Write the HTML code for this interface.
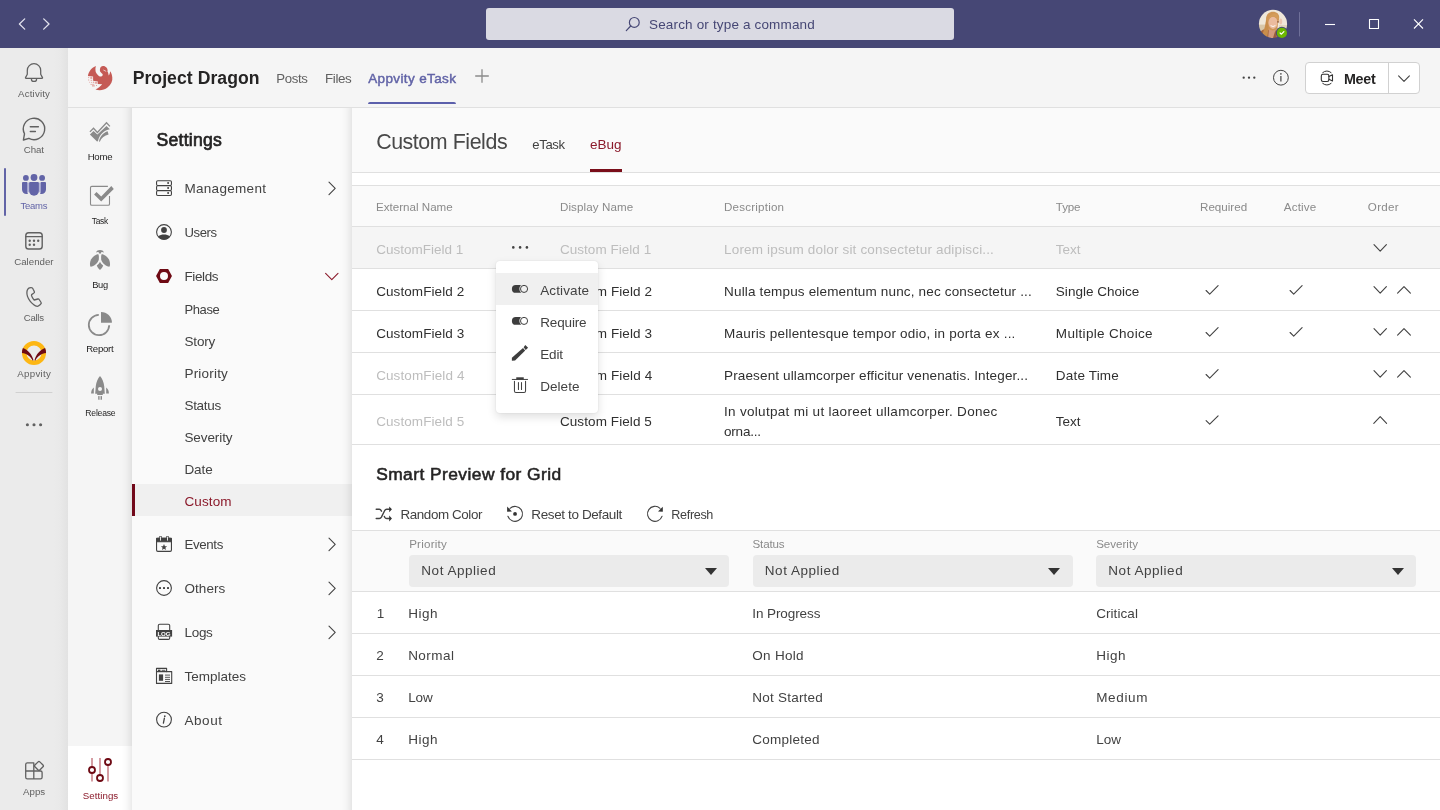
<!DOCTYPE html>
<html><head><meta charset="utf-8"><title>Project Dragon</title>
<style>
*{box-sizing:border-box;margin:0;padding:0}
html,body{width:1440px;height:810px;overflow:hidden;background:#fff;font-family:"Liberation Sans",sans-serif;color:#252424}
.a{position:absolute}
.t{position:absolute;white-space:nowrap;display:block}
svg{position:absolute;overflow:visible}
.hl{position:absolute;height:1px;background:#e0e0e0;left:352px;width:1088px}
#w{position:absolute;left:0;top:0;width:1440px;height:810px;will-change:transform}

</style></head><body>
<div id="w">
<div class="a" style="left:0;top:0;width:1440px;height:48px;background:#464775"></div>
<div class="a" style="left:0;top:48px;width:68px;height:762px;background:linear-gradient(90deg,#ebebeb 0,#ebebeb 54px,#e9e9e9 60px,#e2e2e2 68px)"></div>
<div class="a" style="left:68px;top:48px;width:1372px;height:60px;background:#f5f5f5;border-bottom:1px solid #e0e0e0"></div>
<div class="a" style="left:0;top:108px;width:1440px;height:702px;overflow:hidden"><div class="a" style="left:0;top:-108px;width:1440px;height:810px"><div class="a" style="left:68px;top:108px;width:64px;height:702px;background:#f5f5f5"></div><div class="a" style="left:68px;top:746px;width:64px;height:64px;background:#fff"></div><div class="a" style="left:132px;top:100px;width:220px;height:720px;background:#fafafa;box-shadow:0 0 10px rgba(0,0,0,.17)"></div><div class="a" style="left:132px;top:484px;width:220px;height:32px;background:#f0f0f0"></div><div class="a" style="left:132px;top:484px;width:3px;height:32px;background:#72091a"></div><div class="a" style="left:352px;top:100px;width:1100px;height:720px;background:#fff;box-shadow:0 0 10px rgba(0,0,0,.17)"></div></div></div>
<svg style="left:0;top:0" width="1440" height="48" viewBox="0 0 1440 48" fill="none" stroke="#e3e3ee" stroke-width="1.3" stroke-linecap="round" stroke-linejoin="round"><path d="M24.7 18.9 L19.4 24 L24.7 29.1"/><path d="M43.7 18.9 L49 24 L43.7 29.1"/><path d="M1325 24.5 H1335" stroke="#fff" stroke-width="1.1" stroke-linecap="butt"/><rect x="1369.5" y="19.5" width="9" height="9" stroke="#fff" stroke-width="1.1"/><path d="M1414 19.3 L1423 28.5 M1423 19.3 L1414 28.5" stroke="#fff" stroke-width="1.1" stroke-linecap="butt"/><path d="M1299.5 12.5 V36" stroke="#6f7099" stroke-width="1"/></svg>
<div class="a" style="left:486px;top:8px;width:468px;height:32px;background:#dadae3;border-radius:3px"></div>
<svg style="left:0;top:0" width="1440" height="48" viewBox="0 0 1440 48" fill="none" stroke="#464775" stroke-width="1.2" stroke-linecap="round"><circle cx="634.3" cy="22.4" r="4.9"/><path d="M630.7 26 L626.3 30.6"/></svg>
<span class="t" style="left:649.05px;top:15px;font-size:13.5px;line-height:19px;color:#464775;letter-spacing:0.157px;">Search or type a command</span>
<svg style="left:1256px;top:7px" width="36" height="36" viewBox="0 0 36 36"><defs><clipPath id="av"><circle cx="17" cy="16.9" r="14.1"/></clipPath><filter id="bl" x="-10%" y="-10%" width="120%" height="120%"><feGaussianBlur stdDeviation="0.55"/></filter></defs><g clip-path="url(#av)"><g filter="url(#bl)"><rect x="0" y="0" width="36" height="36" fill="#efe7d9"/><rect x="0" y="17.6" width="12" height="5.4" fill="#d9c7a8"/><rect x="23" y="18" width="10" height="3.4" fill="#e2d5bd"/><path d="M10 12.5 C10 7 13.5 4.8 17 4.8 C21 4.8 23.5 7.5 23.2 11 C23 14 22 15 22 17 L21 24 L10.5 26 C9.5 22 9.5 17 10 12.5 Z" fill="#cf9656"/><path d="M4 24.5 C8 21.5 11 22 13 23.5 L15 32 L5 30 Z" fill="#a8673c"/><path d="M13 22 C15 24 19 24 21 21.5 L22 32 L12 32 Z" fill="#d39a7c"/><ellipse cx="17" cy="15.8" rx="4.6" ry="6.1" fill="#ebbb9e"/><path d="M12.2 13.4 C13 8.5 16 6.2 19.5 6.5 C21.8 7 23 9 22.6 12.8 C21 10.5 19 9.2 16.5 9.4 C14.5 10 13 11.5 12.2 13.4 Z" fill="#d49c5a"/><path d="M10.2 13 C11.6 14 12.5 17 12.4 20 C12.3 24 11.6 27 11.2 31 L6.5 27 C8.5 22 9.6 17 10.2 13 Z" fill="#c98d4c"/><ellipse cx="24.7" cy="14.6" rx="1.5" ry="3" fill="#ecc6b0"/><circle cx="22" cy="14.9" r="0.8" fill="#8a5537"/><path d="M14.6 18.6 Q17 20.4 19.4 18.6" stroke="#fff" stroke-width="0.9" fill="none"/><path d="M19.5 23 L21 31 L17 31 Z" fill="#9b5c3c"/></g></g><circle cx="25.9" cy="25.9" r="6.1" fill="#464775"/><circle cx="25.9" cy="25.9" r="5.1" fill="#6bb700"/><path d="M24.1 26 L25.4 27.2 L27.9 24.6" fill="none" stroke="#fff" stroke-width="1.2" stroke-linecap="round" stroke-linejoin="round"/></svg>
<svg style="left:84px;top:61px" width="32" height="32" viewBox="0 0 32 32"><path d="M11.9 5.1 C8 6.5 4.5 10.5 3.95 15 L9.1 15.4 L9.1 19.8 L13.8 20.5 L13.8 22.9 L18.2 23.3 C16.5 25.5 14 27.5 11.5 28.5 C15 29.6 20 29.5 23.5 26.5 C27 23.5 28.8 20 28.3 16.5 C28.1 14 27.4 12 26.1 10.3 C26 12 25.5 13.5 24.7 14.6 C24.5 12.5 24 11 23.3 9.9 L23.7 9.5 C23.5 8 23 7 22.1 6.3 C21.2 5.3 20 4.8 19 4.9 C17.5 5.1 16.3 6 16.2 7.1 C15.8 8.3 15.8 9.5 16 10.3 C16.6 11.6 17.8 12.2 18.6 13 C19 14.2 18.2 15.4 17 15.6 C15.4 15.6 14.2 14.6 13.4 13.4 C12.2 12 11.5 10.8 11.5 9.5 C11.3 8 11.4 6.5 11.9 5.1 Z" fill="#c55a55"/><path d="M19.4 9 L22.2 10.4" stroke="#f5f5f5" stroke-width="0.7" fill="none"/><g fill="#e3a7a3"><rect x="4.2" y="15.8" width="1" height="1.3"/><rect x="6.3" y="15.9" width="2" height="2"/><rect x="4.2" y="18.4" width="1" height="1.2"/><rect x="6.6" y="18.8" width="1.6" height="1"/><rect x="5.2" y="20.8" width="0.9" height="0.9"/><rect x="7.2" y="20.9" width="1" height="1"/><rect x="9.1" y="20.6" width="1.1" height="1.5"/><rect x="10.9" y="20.8" width="2.6" height="1.9"/><rect x="6.4" y="22.9" width="3.8" height="0.8"/><rect x="8" y="24.2" width="2.8" height="1.3"/><rect x="12" y="24" width="1" height="1"/></g></svg>
<span class="t" style="left:132.65px;top:66px;font-size:17.6px;line-height:24px;color:#252424;letter-spacing:0.058px;font-weight:bold;">Project Dragon</span>
<span class="t" style="left:276.35px;top:69px;font-size:13.2px;line-height:19px;color:#616161;letter-spacing:-0.375px;">Posts</span>
<span class="t" style="left:325.05px;top:69px;font-size:13.4px;line-height:19px;color:#616161;letter-spacing:-0.375px;">Files</span>
<span class="t" style="left:368.25px;top:69px;font-size:13.5px;line-height:19px;color:#6264a7;letter-spacing:0.363px;-webkit-text-stroke:0.45px #6264a7;">Appvity eTask</span>
<div class="a" style="left:368px;top:102px;width:88px;height:2px;background:#5b5fab;border-radius:2px 2px 0 0"></div>
<svg style="left:0;top:48px" width="1440" height="60" viewBox="0 48 1440 60" fill="none" stroke="#8a8a8a" stroke-width="1.1"><path d="M475.2 76 H488.8 M482 69.3 V82.7" stroke-width="1.3"/><g fill="#424242" stroke="none"><circle cx="1243.7" cy="77.7" r="1.15"/><circle cx="1249" cy="77.7" r="1.15"/><circle cx="1254.3" cy="77.7" r="1.15"/></g><circle cx="1280.9" cy="77.7" r="7.4" stroke="#424242" stroke-width="1"/><path d="M1280.9 76 V81.6" stroke="#424242" stroke-width="1.2"/><circle cx="1280.9" cy="73.9" r="0.8" fill="#424242" stroke="none"/></svg>
<div class="a" style="left:1305px;top:62px;width:115px;height:32px;background:#fff;border:1px solid #d1d1d1;border-radius:4px"></div>
<div class="a" style="left:1388px;top:63px;width:1px;height:30px;background:#d1d1d1"></div>
<svg style="left:0;top:48px" width="1440" height="60" viewBox="0 48 1440 60" fill="none" stroke="#333" stroke-width="1.1" stroke-linecap="round" stroke-linejoin="round"><rect x="1321.3" y="74.3" width="7.6" height="7.2" rx="1.7"/><path d="M1328.9 76.6 L1332.5 74.8 V81 L1328.9 79.2"/><path d="M1322.7 72.6 A6.7 6.7 0 0 1 1331.1 72.6" stroke-width="1"/><path d="M1322.7 83.4 A6.7 6.7 0 0 0 1331.1 83.4" stroke-width="1"/><path d="M1398.6 75.8 L1404 81.4 L1409.4 75.8" stroke="#424242" stroke-width="1.1"/></svg>
<span class="t" style="left:1343.95px;top:69px;font-size:14.3px;line-height:20px;color:#252424;letter-spacing:-0.233px;font-weight:bold;">Meet</span>
<svg style="left:0;top:48px" width="68" height="762" viewBox="0 48 68 762" fill="none" stroke="#616161" stroke-width="1.3" stroke-linecap="round" stroke-linejoin="round"><path d="M27.3 74.2 V70.4 A6.7 6.7 0 0 1 40.7 70.4 V74.2 L42.5 77.6 Q42.7 78.3 42 78.3 H26 Q25.3 78.3 25.5 77.6 Z" stroke-width="1.25"/><path d="M31.4 78.9 A2.6 2.6 0 0 0 36.6 78.9" stroke-width="1.25"/><path d="M28.9 138.3 A10.7 10.7 0 1 0 24.5 133.8 L23.4 140 Z" stroke-width="1.4"/><path d="M30.3 126.8 H38.4 M30.3 131.5 H35.4" stroke-width="1.4"/><rect x="25.8" y="232.8" width="16.4" height="16.2" rx="2.8" stroke-width="1.4"/><path d="M25.8 236.7 H42.2" stroke-width="1.3"/><g fill="#616161" stroke="none"><circle cx="29.7" cy="240.7" r="1.2"/><circle cx="34" cy="240.7" r="1.2"/><circle cx="38.2" cy="240.7" r="1.2"/><circle cx="29.7" cy="244.7" r="1.2"/><circle cx="34" cy="244.7" r="1.2"/></g><path d="M31 287.7 C32.4 287.6 32.9 288.5 33.2 289.3 L34.4 291.7 C34.7 292.5 34.3 292.9 33.6 293.3 L31.6 294.6 C31.2 295.2 31.6 296 32 296.8 C32.6 298 33.4 299.2 34.2 300 L37.8 299 C38.6 298.8 39.1 299.4 39.5 300 L41.1 302.5 C41.5 303.3 41.2 303.8 40.5 304.3 C39.5 305.2 38.5 306.3 37.4 306.3 C36 306.2 34.8 305.6 33.8 304.7 C32.4 303.6 31 302.3 29.9 300.8 C28.8 299.4 28 297.9 27.5 296.4 C27 294.9 26.8 293.4 26.9 292.1 C27 290.9 27.2 290 27.7 289.3 C28.2 288.6 28.9 288.1 29.5 287.9 Z"/><path d="M16 392.5 H52" stroke="#d1d1d1" stroke-width="1"/><g fill="#616161" stroke="none"><circle cx="27.4" cy="424.7" r="1.55"/><circle cx="34" cy="424.7" r="1.55"/><circle cx="40.6" cy="424.7" r="1.55"/></g><path d="M27.3 762.9 H33.8 V778.9 H27.3 Q25.7 778.9 25.7 777.3 V764.5 Q25.7 762.9 27.3 762.9 Z M25.7 771 H40.5 Q42.1 771 42.1 772.6 V777.3 Q42.1 778.9 40.5 778.9 H33.8"/><rect x="-3.45" y="-3.45" width="6.9" height="6.9" rx="1.2" transform="translate(38.95 765.9) rotate(45)" fill="#ebebeb"/></svg>
<div class="a" style="left:4px;top:168px;width:2px;height:48px;background:#6264a7;border-radius:1px"></div>
<svg style="left:0;top:48px" width="68" height="762" viewBox="0 48 68 762" fill="#6264a7" stroke="none"><circle cx="34" cy="177.5" r="3.4"/><circle cx="25.9" cy="177.9" r="2.9"/><circle cx="42.1" cy="177.9" r="2.9"/><rect x="27" y="182.6" width="2.3" height="9.6" fill="#b5b6d8"/><rect x="38.7" y="182.6" width="2.3" height="9.6" fill="#b5b6d8"/><path d="M29.1 183 Q29.1 182 30.1 182 H37.9 Q38.9 182 38.9 183 V190.8 A4.9 4.9 0 0 1 29.1 190.8 Z"/><path d="M23 182 H27.2 V191.6 L27.9 193.9 H26.5 C24 193.9 22 191.9 22 189.4 V183 Q22 182 23 182 Z"/><path d="M40.8 182 H45 Q46 182 46 183 V189.4 C46 191.9 44 193.9 41.5 193.9 H40.1 L40.8 191.6 Z"/></svg>
<svg style="left:18px;top:337px" width="32" height="32" viewBox="0 0 32 32"><circle cx="16" cy="16" r="9.8" fill="none" stroke="#fdb714" stroke-width="4.5"/><path d="M4.9 11 C9.5 12.8 14 17 15.5 23.3 L14.5 23.4 C13 19.5 8.5 16.6 3.95 16 C3.9 14.3 4.2 12.6 4.9 11 Z" fill="#6e0b16"/><path d="M27.1 11 C22.5 12.8 18 17 16.5 23.3 L17.5 23.4 C19 19.5 23.5 16.6 28.05 16 C28.1 14.3 27.8 12.6 27.1 11 Z" fill="#6e0b16"/></svg>
<span class="t" style="left:18.05px;top:86px;font-size:9.7px;line-height:15px;color:#616161;letter-spacing:0.171px;">Activity</span>
<span class="t" style="left:23.85px;top:142px;font-size:9.7px;line-height:15px;color:#616161;letter-spacing:-0.133px;">Chat</span>
<span class="t" style="left:20.55px;top:198px;font-size:9.5px;line-height:15px;color:#6264a7;letter-spacing:-0.275px;">Teams</span>
<span class="t" style="left:14.25px;top:254px;font-size:9.7px;line-height:15px;color:#616161;letter-spacing:-0.007px;">Calender</span>
<span class="t" style="left:23.75px;top:310px;font-size:9.6px;line-height:15px;color:#616161;letter-spacing:-0.263px;">Calls</span>
<span class="t" style="left:17.25px;top:366px;font-size:9.7px;line-height:15px;color:#616161;letter-spacing:0.317px;">Appvity</span>
<span class="t" style="left:23.05px;top:784px;font-size:9.7px;line-height:15px;color:#616161;">Apps</span>
<svg style="left:68px;top:108px" width="64" height="702" viewBox="68 108 64 702" fill="#8a8a8a" stroke="none"><path d="M89.9 131.9 L93.5 128.2 L97.4 132.5 L106.5 122.8 L109.9 126.4" fill="none" stroke="#8a8a8a" stroke-width="1.3"/><path d="M89.9 134.4 L93.5 131 L97.4 134.6 L106.5 125.9 L109.8 129.2 C104.5 130.2 99.5 134 97.9 141.2 L97 141.4 Z"/><path d="M99 141.6 C99.6 136.5 103.5 132.6 107.6 131.3 L108.6 134.6 C104.6 135.5 101.4 137.8 99.8 141.8 Z"/><path d="M107.9 186.4 H91.8 Q90.5 186.4 90.5 187.7 V204 Q90.5 205.3 91.8 205.3 H108.2 Q109.5 205.3 109.5 204 V195.9" fill="none" stroke="#8a8a8a" stroke-width="1.1"/><path d="M94.1 194.4 L96.5 192.1 L101.2 196.4 L111.3 185.9 L113.8 188.9 L101.2 201.5 Z"/><path d="M95.9 252.5 C96.5 250.6 98.2 249.9 100 249.9 C101.8 249.9 103.5 250.6 104 252.5 C102.8 251.9 101.6 251.7 101.2 252.3 L101 253.6 H99 L98.7 252.3 C98.3 251.7 97.1 251.9 95.9 252.5 Z"/><path d="M98.4 254.3 C95 254.3 90.8 258 90.1 262.5 C89.8 264.5 90 266 90.6 266.8 C94 266.3 98.2 263 98.8 259.5 C99 257.5 98.9 255.5 98.4 254.3 Z"/><path d="M101.6 254.3 C105 254.3 109.2 258 109.9 262.5 C110.2 264.5 110 266 109.4 266.8 C106 266.3 101.8 263 101.2 259.5 C101 257.5 101.1 255.5 101.6 254.3 Z"/><path d="M100 261.8 C100.8 263.5 102 264.8 103.2 265.5 C102.6 267.2 101.4 268.8 100 269.9 C98.6 268.8 97.4 267.2 96.8 265.5 C98 264.8 99.2 263.5 100 261.8 Z"/><path d="M98.8 314.8 A10.2 10.2 0 1 0 109.2 325.2" fill="none" stroke="#8a8a8a" stroke-width="1.8"/><path d="M101 322.8 V311.9 A10.9 10.9 0 0 1 111.9 322.8 Z"/><path d="M100 375.9 C102.2 378.5 103.8 382 104.2 386 L104.8 393.7 H102.8 V394.9 H97.2 V393.7 H95.2 L95.8 386 C96.2 382 97.8 378.5 100 375.9 Z"/><circle cx="100" cy="389" r="2" fill="#f5f5f5"/><path d="M93.8 387.6 C92 389 91.1 391 91.1 393.6 H93.8 Z"/><path d="M106.2 387.6 C108 389 108.9 391 108.9 393.6 H106.2 Z"/><rect x="98.2" y="396.1" width="1.4" height="3.6"/><rect x="100.6" y="396.1" width="1.4" height="3.6"/><rect x="99.6" y="396.1" width="1" height="3.6" fill="#c4c4c4"/><g stroke="#c77f87" stroke-width="1.5" fill="none"><path d="M92 758 V781.6 M100 758 V781.6 M108 758 V781.6"/></g><g stroke="#6e0a14" stroke-width="1.8" fill="#fff"><circle cx="92" cy="770" r="3"/><circle cx="100" cy="778" r="3"/><circle cx="108" cy="762" r="3"/></g></svg>
<span class="t" style="left:87.65px;top:149px;font-size:9.6px;line-height:15px;color:#252424;letter-spacing:-0.233px;">Home</span>
<span class="t" style="left:91.65px;top:214px;font-size:8.4px;line-height:14px;color:#252424;letter-spacing:-0.200px;">Task</span>
<span class="t" style="left:92.15px;top:278px;font-size:9.3px;line-height:14px;color:#252424;letter-spacing:-0.275px;">Bug</span>
<span class="t" style="left:86.15px;top:341px;font-size:9.6px;line-height:15px;color:#252424;letter-spacing:-0.260px;">Report</span>
<span class="t" style="left:85.35px;top:406px;font-size:8.6px;line-height:14px;color:#252424;letter-spacing:-0.208px;">Release</span>
<span class="t" style="left:82.75px;top:788px;font-size:9.7px;line-height:15px;color:#8b1a2b;letter-spacing:0.064px;">Settings</span>
<span class="t" style="left:156.55px;top:128px;font-size:17.6px;line-height:24px;color:#252424;letter-spacing:0.243px;-webkit-text-stroke:0.7px #252424;">Settings</span>
<span class="t" style="left:184.45px;top:179px;font-size:13.5px;line-height:19px;color:#424242;letter-spacing:0.300px;">Management</span>
<span class="t" style="left:184.45px;top:223px;font-size:13.1px;line-height:19px;color:#424242;letter-spacing:-0.375px;">Users</span>
<span class="t" style="left:184.45px;top:267px;font-size:13.5px;line-height:19px;color:#424242;letter-spacing:-0.380px;">Fields</span>
<span class="t" style="left:184.45px;top:300px;font-size:13.0px;line-height:19px;color:#424242;letter-spacing:-0.388px;">Phase</span>
<span class="t" style="left:184.45px;top:332px;font-size:13.5px;line-height:19px;color:#424242;letter-spacing:-0.150px;">Story</span>
<span class="t" style="left:184.45px;top:364px;font-size:13.5px;line-height:19px;color:#424242;letter-spacing:0.200px;">Priority</span>
<span class="t" style="left:184.45px;top:396px;font-size:13.5px;line-height:19px;color:#424242;letter-spacing:-0.310px;">Status</span>
<span class="t" style="left:184.45px;top:428px;font-size:13.5px;line-height:19px;color:#424242;letter-spacing:-0.093px;">Severity</span>
<span class="t" style="left:184.45px;top:460px;font-size:13.5px;line-height:19px;color:#424242;letter-spacing:-0.067px;">Date</span>
<span class="t" style="left:184.45px;top:535px;font-size:13.3px;line-height:19px;color:#424242;letter-spacing:-0.350px;">Events</span>
<span class="t" style="left:184.45px;top:579px;font-size:13.5px;line-height:19px;color:#424242;letter-spacing:0.060px;">Others</span>
<span class="t" style="left:184.45px;top:623px;font-size:13.5px;line-height:19px;color:#424242;letter-spacing:-0.283px;">Logs</span>
<span class="t" style="left:184.45px;top:667px;font-size:13.5px;line-height:19px;color:#424242;letter-spacing:-0.006px;">Templates</span>
<span class="t" style="left:184.45px;top:711px;font-size:13.5px;line-height:19px;color:#424242;letter-spacing:0.575px;">About</span>
<span class="t" style="left:184.45px;top:492px;font-size:13.5px;line-height:19px;color:#8b1a2b;letter-spacing:0.120px;">Custom</span>
<svg style="left:132px;top:108px" width="220" height="702" viewBox="132 108 220 702" fill="none" stroke="#424242" stroke-width="1.1" stroke-linecap="round" stroke-linejoin="round"><path d="M329 182.2 L335.2 188.4 L329 194.6"/><path d="M329 538.2 L335.2 544.4 L329 550.6"/><path d="M329 582.2 L335.2 588.4 L329 594.6"/><path d="M329 626.2 L335.2 632.4 L329 638.6"/><path d="M325.6 273.4 L331.8 279.6 L338 273.4" stroke="#8b1a2b"/><rect x="156.55" y="180.75" width="14.9" height="4.7" rx="1.2"/><rect x="156.55" y="185.75" width="14.9" height="4.7" rx="1.2"/><rect x="156.55" y="190.75" width="14.9" height="4.7" rx="1.2"/><g fill="#424242" stroke="none"><circle cx="168.1" cy="183.1" r="1"/><circle cx="168.1" cy="188.1" r="1"/><circle cx="168.1" cy="193.1" r="1"/></g><circle cx="164" cy="232" r="7.4"/><circle cx="164" cy="230" r="2.9" fill="#424242" stroke="none"/><path d="M158.1 236.4 C159.8 235 161.8 234.6 164 234.6 C166.2 234.6 168.2 235 169.9 236.4 C168.7 238.5 166.5 239.6 164 239.6 C161.5 239.6 159.3 238.5 158.1 236.4 Z" fill="#424242" stroke="none"/><path d="M159.85 269.1 H168.15 L171.95 276 L168.15 282.9 H159.85 L156.05 276 Z M164 271.9 A4 4 0 1 0 164 279.9 A4 4 0 1 0 164 271.9 Z" fill="#6e0a14" stroke="none" fill-rule="evenodd"/><rect x="156.55" y="538.4" width="14.9" height="13" rx="1.3"/><path d="M156.6 538.4 H171.4 V541.8 H156.6 Z" fill="#424242"/><path d="M160.5 535.9 V540.2 M167.5 535.9 V540.2" stroke-width="2.3" stroke-linecap="butt"/><path d="M160.5 536.6 V540.6 M167.5 536.6 V540.6" stroke="#fafafa" stroke-width="0.9" stroke-linecap="butt"/><path d="M164 544 L164.95 546.2 L167.1 546.3 L165.4 547.8 L166 550 L164 548.8 L162 550 L162.6 547.8 L160.9 546.3 L163.05 546.2 Z" fill="#424242" stroke="none"/><circle cx="164" cy="588" r="7.4"/><g fill="#424242" stroke="none"><rect x="159" y="587" width="2" height="2" rx="0.5"/><rect x="163" y="587" width="2" height="2" rx="0.5"/><rect x="167" y="587" width="2" height="2" rx="0.5"/></g><path d="M158.3 630 V625.6 C158.3 624.8 158.9 624.2 159.7 624.2 H168.3 C169.1 624.2 169.7 624.8 169.7 625.6 V630 M158.3 636.6 V638 C158.3 638.8 158.9 639.4 159.7 639.4 H168.3 C169.1 639.4 169.7 638.8 169.7 638 V636.6"/><rect x="156" y="630" width="16.1" height="6.6" fill="#424242" stroke="none"/><path d="M156.5 671.6 V668.4 H166.6 V671.6" /><rect x="156.5" y="671.6" width="15.2" height="11.8"/><rect x="157.9" y="669.6" width="2.6" height="1.4" fill="#424242" stroke="none"/><path d="M162 670.3 H165" stroke-width="0.9"/><rect x="158.9" y="674.4" width="4.2" height="6.4" fill="#424242" stroke="none"/><path d="M165 675.1 H170 M165 677.3 H170 M165 679.4 H170 M165 681.5 H170" stroke-width="0.9" stroke-linecap="butt"/><circle cx="164" cy="719.6" r="7.4"/><path d="M164.4 718.2 L163.4 723.2" stroke-width="1.3"/><circle cx="164.8" cy="716.2" r="0.85" fill="#424242" stroke="none"/></svg>
<span class="t" style="left:157.45px;top:628px;font-size:6.2px;line-height:11px;color:#fff;letter-spacing:-0.175px;font-weight:bold;">LOG</span>
<div class="a" style="left:352px;top:108px;width:1088px;height:64px;background:#fafafa"></div>
<div class="hl" style="top:172px"></div>
<div class="hl" style="top:185px"></div>
<div class="a" style="left:352px;top:186px;width:1088px;height:40px;background:#fafafa"></div>
<div class="a" style="left:352px;top:227px;width:1088px;height:41px;background:#f5f5f5"></div>
<div class="hl" style="top:226px"></div>
<div class="hl" style="top:268px"></div>
<div class="hl" style="top:310px"></div>
<div class="hl" style="top:352px"></div>
<div class="hl" style="top:394px"></div>
<div class="hl" style="top:444px"></div>
<span class="t" style="left:376.15px;top:128px;font-size:21.4px;line-height:28px;color:#484848;letter-spacing:-0.438px;">Custom Fields</span>
<span class="t" style="left:532.35px;top:135px;font-size:13.1px;line-height:19px;color:#424242;letter-spacing:-0.387px;">eTask</span>
<span class="t" style="left:589.95px;top:135px;font-size:13.5px;line-height:19px;color:#8b1a2b;letter-spacing:0.050px;">eBug</span>
<div class="a" style="left:590px;top:169px;width:32px;height:3px;background:#7a0e1a"></div>
<span class="t" style="left:376.05px;top:198px;font-size:11.6px;line-height:17px;color:#8a8a8a;">External Name</span>
<span class="t" style="left:559.95px;top:198px;font-size:11.6px;line-height:17px;color:#8a8a8a;letter-spacing:0.100px;">Display Name</span>
<span class="t" style="left:724.05px;top:198px;font-size:11.6px;line-height:17px;color:#8a8a8a;letter-spacing:0.200px;">Description</span>
<span class="t" style="left:1055.85px;top:198px;font-size:11.6px;line-height:17px;color:#8a8a8a;letter-spacing:-0.150px;">Type</span>
<span class="t" style="left:1200.05px;top:198px;font-size:11.6px;line-height:17px;color:#8a8a8a;">Required</span>
<span class="t" style="left:1283.85px;top:198px;font-size:11.6px;line-height:17px;color:#8a8a8a;letter-spacing:0.140px;">Active</span>
<span class="t" style="left:1367.85px;top:198px;font-size:11.6px;line-height:17px;color:#8a8a8a;letter-spacing:0.312px;">Order</span>
<span class="t" style="left:376.15px;top:240px;font-size:13.5px;line-height:19px;color:#bdbdbd;letter-spacing:0.004px;">CustomField 1</span>
<span class="t" style="left:376.15px;top:282px;font-size:13.5px;line-height:19px;color:#303030;letter-spacing:0.087px;">CustomField 2</span>
<span class="t" style="left:376.15px;top:324px;font-size:13.5px;line-height:19px;color:#303030;letter-spacing:0.087px;">CustomField 3</span>
<span class="t" style="left:376.15px;top:366px;font-size:13.5px;line-height:19px;color:#bdbdbd;letter-spacing:0.104px;">CustomField 4</span>
<span class="t" style="left:376.15px;top:412px;font-size:13.5px;line-height:19px;color:#bdbdbd;letter-spacing:0.087px;">CustomField 5</span>
<span class="t" style="left:559.95px;top:240px;font-size:13.5px;line-height:19px;color:#bdbdbd;letter-spacing:0.038px;">Custom Field 1</span>
<span class="t" style="left:559.95px;top:282px;font-size:13.5px;line-height:19px;color:#303030;letter-spacing:0.100px;">Custom Field 2</span>
<span class="t" style="left:559.95px;top:324px;font-size:13.5px;line-height:19px;color:#303030;letter-spacing:0.100px;">Custom Field 3</span>
<span class="t" style="left:559.95px;top:366px;font-size:13.5px;line-height:19px;color:#303030;letter-spacing:0.115px;">Custom Field 4</span>
<span class="t" style="left:559.95px;top:412px;font-size:13.5px;line-height:19px;color:#303030;letter-spacing:0.085px;">Custom Field 5</span>
<span class="t" style="left:724.05px;top:240px;font-size:13.5px;line-height:19px;color:#bdbdbd;letter-spacing:0.164px;">Lorem ipsum dolor sit consectetur adipisci...</span>
<span class="t" style="left:724.05px;top:282px;font-size:13.5px;line-height:19px;color:#303030;letter-spacing:0.161px;">Nulla tempus elementum nunc, nec consectetur ...</span>
<span class="t" style="left:724.05px;top:324px;font-size:13.5px;line-height:19px;color:#303030;letter-spacing:0.211px;">Mauris pellentesque tempor odio, in porta ex ...</span>
<span class="t" style="left:724.05px;top:366px;font-size:13.5px;line-height:19px;color:#303030;letter-spacing:0.137px;">Praesent ullamcorper efficitur venenatis. Integer...</span>
<span class="t" style="left:724.05px;top:402px;font-size:13.5px;line-height:19px;color:#303030;letter-spacing:0.300px;">In volutpat mi ut laoreet ullamcorper. Donec</span>
<span class="t" style="left:724.05px;top:422px;font-size:13.5px;line-height:19px;color:#303030;letter-spacing:-0.225px;">orna...</span>
<span class="t" style="left:1055.85px;top:240px;font-size:13.5px;line-height:19px;color:#bdbdbd;letter-spacing:-0.017px;">Text</span>
<span class="t" style="left:1055.85px;top:282px;font-size:13.5px;line-height:19px;color:#303030;letter-spacing:0.017px;">Single Choice</span>
<span class="t" style="left:1055.85px;top:324px;font-size:13.5px;line-height:19px;color:#303030;letter-spacing:0.314px;">Multiple Choice</span>
<span class="t" style="left:1055.85px;top:366px;font-size:13.5px;line-height:19px;color:#303030;letter-spacing:0.175px;">Date Time</span>
<span class="t" style="left:1055.85px;top:412px;font-size:13.5px;line-height:19px;color:#303030;letter-spacing:-0.017px;">Text</span>
<svg style="left:352px;top:108px" width="1088" height="702" viewBox="352 108 1088 702" fill="none" stroke="#424242" stroke-width="1.1" stroke-linecap="round" stroke-linejoin="round"><g fill="#424242" stroke="none"><circle cx="513.3" cy="247.4" r="1.3"/><circle cx="520.1" cy="247.4" r="1.3"/><circle cx="526.9" cy="247.4" r="1.3"/></g><path d="M1206.1 290.5 L1209.7 294.09999999999997 L1218.1 285.7"/><path d="M1206.1 332.5 L1209.7 336.09999999999997 L1218.1 327.7"/><path d="M1206.1 374.5 L1209.7 378.09999999999997 L1218.1 369.7"/><path d="M1206.1 420.6 L1209.7 424.2 L1218.1 415.8"/><path d="M1290.1 290.5 L1293.7 294.09999999999997 L1302.1 285.7"/><path d="M1290.1 332.5 L1293.7 336.09999999999997 L1302.1 327.7"/><path d="M1374.0 244.6 L1380.2 251.20000000000002 L1386.4 244.6"/><path d="M1374.0 286.59999999999997 L1380.2 293.2 L1386.4 286.59999999999997"/><path d="M1374.0 328.59999999999997 L1380.2 335.2 L1386.4 328.59999999999997"/><path d="M1374.0 370.59999999999997 L1380.2 377.2 L1386.4 370.59999999999997"/><path d="M1397.6 293.2 L1404.0 286.59999999999997 L1410.4 293.2"/><path d="M1397.6 335.2 L1404.0 328.59999999999997 L1410.4 335.2"/><path d="M1397.6 377.2 L1404.0 370.59999999999997 L1410.4 377.2"/><path d="M1373.8 423.3 L1380.2 416.7 L1386.6000000000001 423.3"/></svg>
<div class="a" style="left:496px;top:261px;width:102px;height:152px;background:#fff;border-radius:4px;box-shadow:0 4px 10px rgba(0,0,0,.13),0 0 2px rgba(0,0,0,.10)"></div>
<div class="a" style="left:496px;top:273px;width:102px;height:32px;background:#f0f0f0"></div>
<span class="t" style="left:540.15px;top:281px;font-size:13.5px;line-height:19px;color:#424242;letter-spacing:0.129px;">Activate</span>
<span class="t" style="left:540.15px;top:313px;font-size:13.5px;line-height:19px;color:#424242;letter-spacing:-0.133px;">Require</span>
<span class="t" style="left:540.15px;top:345px;font-size:13.5px;line-height:19px;color:#424242;letter-spacing:-0.117px;">Edit</span>
<span class="t" style="left:540.15px;top:377px;font-size:13.5px;line-height:19px;color:#424242;letter-spacing:0.060px;">Delete</span>
<svg style="left:496px;top:261px" width="102" height="151" viewBox="496 261 102 151" fill="none" stroke="#424242" stroke-width="1.1" stroke-linejoin="round"><rect x="511.9" y="285.05" width="12" height="7.75" rx="3.87" fill="#3d3d3d" stroke="none"/><circle cx="524.05" cy="288.9" r="4.7" fill="#f0f0f0" stroke="none"/><circle cx="524.05" cy="288.9" r="3.55" fill="#f0f0f0" stroke="#3d3d3d" stroke-width="1"/><rect x="511.9" y="317.05" width="12" height="7.75" rx="3.87" fill="#3d3d3d" stroke="none"/><circle cx="524.05" cy="320.9" r="4.7" fill="#fff" stroke="none"/><circle cx="524.05" cy="320.9" r="3.55" fill="#fff" stroke="#3d3d3d" stroke-width="1"/><path d="M511.9 357.7 L523 348.07 L525.2 350.4 L515.07 360.56 L511.9 360.7 Z" fill="#3d3d3d" stroke="none"/><path d="M523.6 347.3 L525.3 344.9 L528.1 347.7 L525.7 350 Z" fill="#3d3d3d" stroke="none"/><path d="M511.9 379.45 H527.95" stroke-width="1"/><rect x="516.25" y="377.3" width="7.5" height="2.2" fill="#3d3d3d" stroke="none"/><path d="M514.45 381.3 V390.9 Q514.45 392.4 515.95 392.4 H524.05 Q525.55 392.4 525.55 390.9 V381.3" stroke-width="1.05" stroke-linecap="round"/><path d="M518.45 382.4 V389.5 M521.5 382.4 V389.5" stroke-width="1.05" stroke-linecap="round"/></svg>
<span class="t" style="left:376.15px;top:462px;font-size:17.4px;line-height:24px;color:#252424;letter-spacing:0.436px;-webkit-text-stroke:0.55px #252424;">Smart Preview for Grid</span>
<span class="t" style="left:400.45px;top:505px;font-size:13.4px;line-height:19px;color:#424242;letter-spacing:-0.391px;">Random Color</span>
<span class="t" style="left:531.35px;top:505px;font-size:13.5px;line-height:19px;color:#424242;letter-spacing:-0.387px;">Reset to Default</span>
<span class="t" style="left:671.35px;top:506px;font-size:12.6px;line-height:18px;color:#424242;letter-spacing:-0.350px;">Refresh</span>
<div class="hl" style="top:530px"></div>
<div class="a" style="left:352px;top:531px;width:1088px;height:60px;background:#fafafa"></div>
<div class="hl" style="top:591px"></div>
<div class="hl" style="top:633px"></div>
<div class="hl" style="top:675px"></div>
<div class="hl" style="top:717px"></div>
<div class="hl" style="top:759px"></div>
<div class="a" style="left:409px;top:555px;width:320px;height:32px;background:#ebebeb;border-radius:4px"></div>
<div class="a" style="left:704.6px;top:567.8px;width:0;height:0;border-left:6px solid transparent;border-right:6px solid transparent;border-top:7.2px solid #333"></div>
<span class="t" style="left:421.35px;top:561px;font-size:13.5px;line-height:19px;color:#424242;letter-spacing:0.525px;">Not Applied</span>
<div class="a" style="left:752.5px;top:555px;width:320px;height:32px;background:#ebebeb;border-radius:4px"></div>
<div class="a" style="left:1048.1px;top:567.8px;width:0;height:0;border-left:6px solid transparent;border-right:6px solid transparent;border-top:7.2px solid #333"></div>
<span class="t" style="left:764.85px;top:561px;font-size:13.5px;line-height:19px;color:#424242;letter-spacing:0.525px;">Not Applied</span>
<div class="a" style="left:1096px;top:555px;width:320px;height:32px;background:#ebebeb;border-radius:4px"></div>
<div class="a" style="left:1391.6px;top:567.8px;width:0;height:0;border-left:6px solid transparent;border-right:6px solid transparent;border-top:7.2px solid #333"></div>
<span class="t" style="left:1108.35px;top:561px;font-size:13.5px;line-height:19px;color:#424242;letter-spacing:0.525px;">Not Applied</span>
<span class="t" style="left:409.15px;top:535px;font-size:11.6px;line-height:17px;color:#8a8a8a;letter-spacing:0.229px;">Priority</span>
<span class="t" style="left:752.55px;top:535px;font-size:11.6px;line-height:17px;color:#8a8a8a;letter-spacing:-0.160px;">Status</span>
<span class="t" style="left:1096.15px;top:535px;font-size:11.6px;line-height:17px;color:#8a8a8a;letter-spacing:-0.014px;">Severity</span>
<span class="t" style="left:376.75px;top:604px;font-size:13.5px;line-height:19px;color:#424242;">1</span>
<span class="t" style="left:376.35px;top:646px;font-size:13.5px;line-height:19px;color:#424242;">2</span>
<span class="t" style="left:376.35px;top:688px;font-size:13.5px;line-height:19px;color:#424242;">3</span>
<span class="t" style="left:376.35px;top:730px;font-size:13.5px;line-height:19px;color:#424242;">4</span>
<span class="t" style="left:408.15px;top:604px;font-size:13.5px;line-height:19px;color:#424242;letter-spacing:0.517px;">High</span>
<span class="t" style="left:408.15px;top:646px;font-size:13.5px;line-height:19px;color:#424242;letter-spacing:0.460px;">Normal</span>
<span class="t" style="left:408.15px;top:688px;font-size:13.5px;line-height:19px;color:#424242;letter-spacing:-0.050px;">Low</span>
<span class="t" style="left:408.15px;top:730px;font-size:13.5px;line-height:19px;color:#424242;letter-spacing:0.517px;">High</span>
<span class="t" style="left:752.25px;top:604px;font-size:13.5px;line-height:19px;color:#424242;letter-spacing:-0.085px;">In Progress</span>
<span class="t" style="left:752.25px;top:646px;font-size:13.5px;line-height:19px;color:#424242;letter-spacing:0.300px;">On Hold</span>
<span class="t" style="left:752.25px;top:688px;font-size:13.5px;line-height:19px;color:#424242;letter-spacing:0.230px;">Not Started</span>
<span class="t" style="left:752.25px;top:730px;font-size:13.5px;line-height:19px;color:#424242;letter-spacing:0.250px;">Completed</span>
<span class="t" style="left:1096.15px;top:604px;font-size:13.5px;line-height:19px;color:#424242;letter-spacing:0.079px;">Critical</span>
<span class="t" style="left:1096.15px;top:646px;font-size:13.5px;line-height:19px;color:#424242;letter-spacing:0.517px;">High</span>
<span class="t" style="left:1096.15px;top:688px;font-size:13.5px;line-height:19px;color:#424242;letter-spacing:0.660px;">Medium</span>
<span class="t" style="left:1096.15px;top:730px;font-size:13.5px;line-height:19px;color:#424242;letter-spacing:0.050px;">Low</span>
<svg style="left:352px;top:496px" width="400" height="36" viewBox="352 496 400 36" fill="none" stroke="#424242" stroke-width="1.1" stroke-linecap="round" stroke-linejoin="round"><g stroke-width="1.4"><path d="M376.2 518.5 H379.3 C380.4 518.5 380.9 518 381.4 517.1 L384.6 510.7 C385.1 509.8 385.6 509.3 386.7 509.3 H390"/><path d="M376.2 509.3 H379.3 C380.3 509.3 380.8 509.8 381.2 510.6 L381.5 511.2"/><path d="M384.3 516.4 L384.7 517.2 C385.1 518 385.6 518.5 386.7 518.5 H390"/></g><path d="M389.2 506.4 L391.95 509.3 L389.2 512.3 Z M389.2 515.55 L391.95 518.5 L389.2 521.4 Z" fill="#333" stroke="none"/><path d="M510 508.3 A7.5 7.5 0 1 1 507.9 516.3"/><path d="M507.1 506.6 V511.75 L511.9 511.4 Z" fill="#333" stroke="none"/><circle cx="515.04" cy="513.93" r="1.9" fill="#333" stroke="none"/><path d="M660.05 508.3 A7.5 7.5 0 1 0 662.1 516.2"/><path d="M662.8 506.74 V511.75 L657.97 511.4 Z" fill="#333" stroke="none"/></svg>
</div>
</body></html>
